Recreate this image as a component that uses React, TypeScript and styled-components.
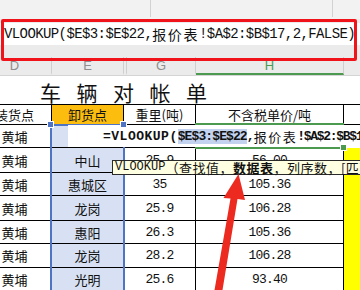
import React from 'react';
import styled, { createGlobalStyle } from 'styled-components';

const Global = createGlobalStyle`
  html, body { margin: 0; padding: 0; background: #fff; }
  body { font-family: "Noto Sans CJK SC", sans-serif; }
`;

const MONO = '"Liberation Mono", "DejaVu Sans Mono", monospace';
const CJK = '"Noto Sans CJK SC", sans-serif';

const Page = styled.div`
  position: relative;
  width: 360px;
  height: 290px;
  overflow: hidden;
  background: #fff;
  display: flex;
  flex-direction: column;
`;

const Toolbar = styled.div`
  flex: none;
  height: 19px;
  background: #f2f2f2;
  display: flex;
`;

const ToolSlot = styled.div<{ $w: number }>`
  width: ${p => p.$w}px;
  flex: none;
`;

const ToolSep = styled.div`
  width: 1px;
  height: 17px;
  background: #d2d2d2;
`;

const FormulaArea = styled.div`
  flex: none;
  height: 38px;
  box-sizing: border-box;
  padding-top: 4px;
  background: #ebebeb;
`;

const FormulaInput = styled.div`
  height: 22px;
  background: #fff;
  display: flex;
  align-items: center;
  padding-left: 4px;
  white-space: nowrap;
  overflow: hidden;
  color: #111;
`;

const Seg = styled.span<{ $size: number; $ls?: number; $cjk?: boolean; $bold?: boolean; $hl?: boolean }>`
  font-family: ${p => (p.$cjk ? CJK : MONO)};
  font-size: ${p => p.$size}px;
  letter-spacing: ${p => p.$ls ?? 0}px;
  font-weight: ${p => (p.$bold ? 700 : 400)};
  background: ${p => (p.$hl ? '#c3d2ef' : 'transparent')};
  line-height: 15px;
`;

const Cursor = styled.span`
  display: inline-block;
  width: 1px;
  height: 15px;
  background: #000;
`;

const ColHeader = styled.div`
  flex: none;
  height: 19px;
  margin-left: -22px;
  width: 430px;
  display: grid;
  grid-template-columns: 74px 72px 3px 69px 148px 64px;
  background: #ebebeb;
  box-sizing: border-box;
  border-bottom: 1px solid #d4d4d4;
`;

const ColLetter = styled.div<{ $active?: boolean }>`
  box-sizing: border-box;
  border-right: 1px solid #cfcfcf;
  border-bottom: 2px solid ${p => (p.$active ? '#4c9a4f' : 'transparent')};
  display: flex;
  align-items: center;
  justify-content: center;
  font-family: "Liberation Sans", Arial, sans-serif;
  font-size: 13px;
  color: ${p => (p.$active ? '#4c9a4f' : '#8e8e8e')};
  padding-top: 1px;
`;

const Sheet = styled.div`
  margin-left: -22px;
  width: 430px;
  display: grid;
  grid-template-columns: 74px 72px 72px 148px 64px;
`;

const TitleCell = styled.div`
  grid-column: 1 / -1;
  height: 28px;
  box-sizing: border-box;
  padding: 4px 0 0 62px;
  display: flex;
  align-items: center;
  font-family: ${CJK};
  font-size: 21px;
  letter-spacing: 15.5px;
  color: #111;
`;

const Cell = styled.div<{ $h: number; $top?: boolean; $bg?: string; $noBottom?: boolean; $mono?: boolean }>`
  box-sizing: border-box;
  height: ${p => p.$h}px;
  border-right: 1px solid #000;
  border-bottom: ${p => (p.$noBottom ? 'none' : '1px solid #000')};
  border-top: ${p => (p.$top ? '1px solid #000' : 'none')};
  background: ${p => p.$bg ?? '#fff'};
  display: flex;
  align-items: center;
  justify-content: center;
  font-family: ${p => (p.$mono ? MONO : CJK)};
  font-size: 13px;
  letter-spacing: ${p => (p.$mono ? '-0.8px' : '0')};
  color: #111;
  white-space: nowrap;
  overflow: hidden;
`;

const RedBox = styled.div`
  position: absolute;
  left: 1px;
  top: 19px;
  width: 356px;
  height: 42px;
  box-sizing: border-box;
  border: 3.5px solid #f0141a;
  border-radius: 2px;
  pointer-events: none;
`;

const Selection = styled.div`
  position: absolute;
  left: 50px;
  top: 124px;
  width: 75px;
  height: 200px;
  box-sizing: border-box;
  border: 2px solid #5074c4;
  border-bottom: none;
`;

const Handle = styled.div<{ $x: number; $y: number; $c: string }>`
  position: absolute;
  left: ${p => p.$x}px;
  top: ${p => p.$y}px;
  width: 5px;
  height: 5px;
  background: ${p => p.$c};
  box-shadow: 0 0 0 1px #fff;
`;

const Editor = styled.div`
  position: absolute;
  left: 68px;
  top: 125px;
  width: 300px;
  height: 22px;
  background: #fff;
  display: flex;
  align-items: center;
  padding-left: 35px;
  box-sizing: border-box;
  white-space: nowrap;
  color: #111;
`;

const ActiveCell = styled.div`
  position: absolute;
  left: 195px;
  top: 123px;
  width: 149px;
  height: 26px;
  box-sizing: border-box;
  border-top: 2px solid #4c9a4f;
  border-bottom: 2px solid #4c9a4f;
`;

const Tooltip = styled.div`
  position: absolute;
  left: 112px;
  top: 160px;
  width: 260px;
  height: 15px;
  box-sizing: border-box;
  background: #ffffe1;
  border: 1px solid #2a2a2a;
  display: flex;
  align-items: center;
  padding-left: 2px;
  white-space: nowrap;
  color: #111;
`;

const Arrow = styled.svg`
  position: absolute;
  left: 200px;
  top: 168px;
  width: 50px;
  height: 122px;
  overflow: visible;
`;

type Row = { h: number; d: string; e: string; g: string; v: string; formula?: boolean };

const rows: Row[] = [
  { h: 23, d: '黄埔', e: '', g: '', v: '', formula: true },
  { h: 25, d: '黄埔', e: '中山', g: '25.9', v: '56.00' },
  { h: 23, d: '黄埔', e: '惠城区', g: '35', v: '105.36' },
  { h: 25, d: '黄埔', e: '龙岗', g: '25.9', v: '106.28' },
  { h: 23, d: '黄埔', e: '惠阳', g: '26.3', v: '105.36' },
  { h: 24, d: '黄埔', e: '龙岗', g: '28.2', v: '106.28' },
  { h: 24, d: '黄埔', e: '光明', g: '25.6', v: '93.40' },
];

export default function App() {
  return (
    <Page>
      <Global />
      <Toolbar>
        <ToolSlot $w={150} />
        <ToolSep />
        <ToolSlot $w={181} />
        <ToolSep />
      </Toolbar>
      <FormulaArea>
        <FormulaInput>
          <Seg $size={14} $ls={-0.6}>VLOOKUP($E$3:$E$22,</Seg>
          <Seg $size={14} $ls={1.6} $cjk>报价表</Seg>
          <Seg $size={14} $ls={-0.6}>!$A$2:$B$17,2,FALSE)</Seg>
        </FormulaInput>
      </FormulaArea>
      <ColHeader>
        <ColLetter>D</ColLetter>
        <ColLetter>E</ColLetter>
        <ColLetter />
        <ColLetter>G</ColLetter>
        <ColLetter $active>H</ColLetter>
        <ColLetter />
      </ColHeader>
      <Sheet>
        <TitleCell>车辆对帐单</TitleCell>
        <Cell $h={21} $top>装货点</Cell>
        <Cell $h={21} $top $bg="#fcbd0f">卸货点</Cell>
        <Cell $h={21} $top>重里(吨)</Cell>
        <Cell $h={21} $top>不含税单价/吨</Cell>
        <Cell $h={21} $top />
        {rows.map((r, i) => (
          <React.Fragment key={i}>
            <Cell $h={r.h}>{r.d}</Cell>
            <Cell $h={r.h} $bg="#d7e1f3">{r.e}</Cell>
            <Cell $h={r.h} $mono>{r.g}</Cell>
            <Cell $h={r.h} $mono>{r.v}</Cell>
            <Cell $h={r.h} $noBottom $bg={r.formula ? '#fff' : '#ffff00'} />
          </React.Fragment>
        ))}
      </Sheet>

      <Selection />
      <Editor>
        <Seg $size={13} $ls={0.5} $bold>=VLOOKUP(</Seg>
        <Seg $size={13} $ls={-0.9} $bold $hl>$E$3:$E$22</Seg>
        <Seg $size={13} $ls={-0.9} $bold>,</Seg>
        <Seg $size={13} $ls={1.5} $cjk>报价</Seg>
        <Cursor />
        <Seg $size={13} $ls={1.5} $cjk>表</Seg>
        <Seg $size={13} $ls={-1.3} $bold>!$A$2:$B$17,2,FALSE)</Seg>
      </Editor>
      <Handle $x={48} $y={122} $c="#5074c4" />
      <Handle $x={121} $y={122} $c="#5074c4" />
      <ActiveCell />
      <Handle $x={341} $y={145} $c="#4c9a4f" />
      <Tooltip>
        <Seg $size={12} $ls={0}>VLOOKUP</Seg>
        <Seg $size={13} $ls={0.5} $cjk>（查找值，</Seg>
        <Seg $size={13} $ls={0.5} $cjk $bold>数据表</Seg>
        <Seg $size={13} $ls={0.5} $cjk>，列序数，[匹配条件]）</Seg>
      </Tooltip>
      <Arrow viewBox="0 0 50 122">
        <polygon
          points="38.5,6 45,32 37.5,31 22.5,122 14.5,122 30.5,30.5 23.5,30"
          fill="#ec2a1f"
        />
      </Arrow>
      <RedBox />
    </Page>
  );
}
